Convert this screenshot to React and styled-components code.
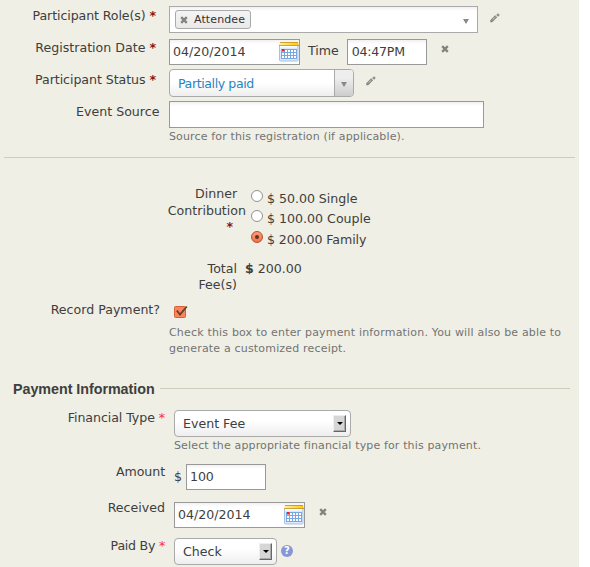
import React from "react";
import styled, { createGlobalStyle } from "styled-components";

const Global = createGlobalStyle`
  * { box-sizing: border-box; }
  html, body { margin: 0; background: #fff; }
  body { overflow: hidden; }
`;

const Page = styled.main`
  width: 579px;
  height: 567px;
  overflow: hidden;
  background: #efefe5;
  color: #3e3e3e;
  font: 12.6px/16px "DejaVu Sans", sans-serif;
  display: flex;
  flex-direction: column;
`;

const Row = styled.div`
  display: flex;
  flex: none;
  align-items: flex-start;
  height: ${(p) => p.$h}px;
`;

const Label = styled.div`
  flex: none;
  width: ${(p) => p.$w || 160}px;
  padding-right: ${(p) => p.$pr || 0}px;
  margin-top: ${(p) => p.$top || 0}px;
  text-align: right;
  white-space: nowrap;
  letter-spacing: ${(p) => p.$ls || 0}px;
`;

const Required = styled.span`
  color: ${(p) => (p.$bright ? "#ff2a3c" : "#8e1414")};
  font-weight: ${(p) => (p.$bright ? 400 : 700)};
`;

const Field = styled.div`
  display: flex;
  flex-direction: column;
  margin-left: 9px;
`;

const Line = styled.div`
  display: flex;
  align-items: flex-start;
`;

const Box = styled.div`
  display: flex;
  align-items: center;
  flex: none;
  width: ${(p) => p.$w}px;
  height: ${(p) => p.$h || 26}px;
  padding-left: ${(p) => p.$pl || 3}px;
  letter-spacing: ${(p) => p.$ls || 0}px;
  border: 1px solid #999;
  background: linear-gradient(#f1f1f1, #fff 4px);
`;

const TagBox = styled(Box)`
  justify-content: space-between;
  padding: 0 8px 0 5px;
  border-color: #aaa;
`;

const Tag = styled.div`
  display: flex;
  align-items: center;
  gap: 6px;
  height: 19px;
  width: 76px;
  padding-left: 4px;
  border: 1px solid #aaa;
  border-radius: 3px;
  background: linear-gradient(#f4f4f4, #e9e9e9);
  color: #333;
  font-size: 11px;
  letter-spacing: 0.1px;
`;

const Combo = styled.div`
  display: flex;
  width: 185px;
  height: 28px;
  border: 1px solid #aaa;
  border-radius: 4px;
  overflow: hidden;
  background: linear-gradient(#fff 50%, #eee);
  color: #2786c2;
`;

const ComboText = styled.div`
  flex: 1;
  padding: 6px 0 0 8px;
  letter-spacing: -0.42px;
`;

const ComboArrow = styled.div`
  display: flex;
  align-items: center;
  justify-content: center;
  width: 19px;
  padding-top: 2px;
  border-left: 1px solid #aaa;
  background: linear-gradient(#eee 30%, #ccc);
`;

const Select = styled.div`
  display: flex;
  align-items: center;
  justify-content: space-between;
  width: ${(p) => p.$w}px;
  height: 27px;
  padding: 0 4px 0 8px;
  border: 1px solid #aaa;
  border-radius: 4px;
  background: linear-gradient(#fff 40%, #eee);
`;

const SelectButton = styled.span`
  display: flex;
  align-items: center;
  justify-content: center;
  width: 13px;
  height: 17px;
  border: 1px solid;
  border-color: #eee #666 #666 #eee;
  box-shadow: inset -1px -1px #aaa;
  background: #d6d6d6;
`;

const Hint = styled.div`
  color: #737373;
  font-size: 11px;
  line-height: 16px;
  letter-spacing: ${(p) => p.$ls || 0.14}px;
  white-space: pre;
`;

const Inset = styled.div`
  flex: none;
  margin: ${(p) => p.$t || 0}px 0 0 ${(p) => p.$l || 0}px;
`;

const Divider = styled.div`
  flex: none;
  width: 571px;
  height: 1px;
  margin-left: 4px;
  background: #cdcdba;
`;

const Options = styled.div`
  display: flex;
  flex-direction: column;
  margin-left: 5px;
`;

const Option = styled.div`
  display: flex;
  gap: 4px;
  height: ${(p) => p.$h || 20}px;
`;

const OptionText = styled.span`
  margin-top: 2px;
  letter-spacing: ${(p) => p.$ls || 0}px;
`;

const Radio = styled.span`
  display: flex;
  align-items: center;
  justify-content: center;
  width: 12px;
  height: 12px;
  margin-top: 1px;
  border: 1px solid ${(p) => (p.$on ? "#b44f31" : "#929292")};
  border-radius: 50%;
  background: ${(p) => (p.$on ? "linear-gradient(#ff9c76, #ef7449)" : "#fff")};

  &::after {
    content: "";
    width: 4px;
    height: 4px;
    border-radius: 50%;
    background: ${(p) => (p.$on ? "#64301f" : "transparent")};
  }
`;

const Legend = styled.div`
  display: flex;
  align-items: center;
  flex: none;
  width: 570px;
  height: 16px;
  padding-left: 13px;
  gap: 5px;
  white-space: nowrap;
  font: bold 14.3px/16px "Liberation Sans", Arial, sans-serif;
  letter-spacing: -0.03px;

  &::after {
    content: "";
    flex: 1;
    height: 1px;
    margin-bottom: 1px;
    background: #cdcdba;
  }
`;

const Icon = styled.svg`
  display: block;
  flex: none;
`;

const Down = ({ color = "#888", w = 6, h = 5 }) => (
  <Icon width={w} height={h} viewBox="0 0 7 5" preserveAspectRatio="none"><path d="M0 0h7L3.5 5z" fill={color} /></Icon>
);

const Cross = () => (
  <Icon width="8" height="8" viewBox="0 0 8 8">
    <path d="M1.2 1.2l5.6 5.6M6.8 1.2L1.2 6.8" stroke="#84847e" strokeWidth="2.4" />
  </Icon>
);

const Pencil = () => (
  <Icon width="10" height="10" viewBox="0 0 10 10">
    <path d="M0.3 9.3V7.2L5.2 2.3l1.9 1.9-4.9 5z" fill="#80807a" />
    <path d="M2 7.4l4-4" stroke="#efefe5" strokeWidth=".9" strokeDasharray="1.4 .6" />
    <path d="M6.5 1.5h1V.5h1v1h1v1h-1v1h-1v-1h-1z" fill="#777771" />
  </Icon>
);

const Calendar = () => (
  <Icon width="20" height="20" viewBox="0 0 20 20">
    <defs>
      <linearGradient id="gold"><stop stopColor="#fff1a4" /><stop offset="1" stopColor="#ffc900" /></linearGradient>
    </defs>
    <rect x=".5" y="2.5" width="18.5" height="16.5" rx="1" fill="#dce9fa" stroke="#a9c0e6" />
    <rect x="1" y="4" width="17" height="1.5" fill="#fff" />
    <path d="M1 0h18l1 3.5H0z" fill="url(#gold)" />
    <path d="M1 .5h18M0 3.5h20" stroke="#c5901b" strokeWidth=".8" />
    <rect x="2" y="7" width="16" height="10" fill="#78a8e0" />
    <g fill="#fff">
      {[0, 1, 2].map((r) => [0, 1, 2, 3, 4].map((c) => (
        <rect key={`${r}-${c}`} x={3 + c * 3} y={8 + r * 3} width="2" height="2" />
      )))}
    </g>
    <rect x="3" y="7" width="2.5" height="2.5" fill="#f02516" />
  </Icon>
);

const Checkbox = () => (
  <Icon width="15" height="14" viewBox="0 0 15 14">
    <rect x=".5" y="1.5" width="11" height="11" rx="1" fill="#fa8559" stroke="#d2623b" />
    <path d="M2.8 5.5l3.2 4L12.8 1.5" fill="none" stroke="#68402f" strokeWidth="1.9" />
  </Icon>
);

const HelpBadge = styled.span`
  display: flex;
  align-items: center;
  justify-content: center;
  width: 12px;
  height: 12px;
  border-radius: 50%;
  background: #8896d7;
  color: #fff;
  font: bold 10px/12px "DejaVu Sans", sans-serif;
`;

const DateText = styled.span`
  flex: 1;
`;

const DateBox = () => (
  <Box $w={131}><DateText>04/20/2014</DateText><Calendar /></Box>
);

const DropDown = ({ w, children }) => (
  <Select $w={w}>{children}<SelectButton><Down color="#000" w={6} h={3} /></SelectButton></Select>
);

export default function App() {
  return (
    <Page>
      <Global />
      <Inset $t={6} />
      <Row $h={33}>
        <Label $top={2} $pr={4} $ls={-0.1}>Participant Role(s) <Required>*</Required></Label>
        <Field>
          <TagBox $w={309} $h={27}>
            <Tag><Cross />Attendee</Tag>
            <Inset $t={3}><Down /></Inset>
          </TagBox>
        </Field>
        <Inset $l={12} $t={7}><Pencil /></Inset>
      </Row>
      <Row $h={30}>
        <Label $top={1} $pr={4}>Registration Date <Required>*</Required></Label>
        <Field><DateBox /></Field>
        <Inset $l={8} $t={4}>Time</Inset>
        <Inset $l={8}><Box $w={80} $pl={4} $ls={-0.25}>04:47PM</Box></Inset>
        <Inset $l={14} $t={6}><Cross /></Inset>
      </Row>
      <Row $h={32}>
        <Label $top={3} $pr={4} $ls={-0.06}>Participant Status <Required>*</Required></Label>
        <Field><Combo><ComboText>Partially paid</ComboText><ComboArrow><Down /></ComboArrow></Combo></Field>
        <Inset $l={12} $t={7}><Pencil /></Inset>
      </Row>
      <Row $h={56}>
        <Label $top={3} $pr={0.6}>Event Source</Label>
        <Field>
          <Box $w={315} $h={27} />
          <Inset $t={1}><Hint>Source for this registration (if applicable).</Hint></Inset>
        </Field>
      </Row>
      <Divider />
      <Inset $t={28} />
      <Row $h={75}>
        <Label $w={246} $pr={0}>
          <Line><Inset $l={195}>Dinner</Inset></Line>
          <Inset $t={1}>Contribution</Inset>
          <Label $w={233}><Required>*</Required></Label>
        </Label>
        <Options>
          <Inset $t={3} />
          <Option><Radio /><OptionText $ls={-0.03}>$ 50.00 Single</OptionText></Option>
          <Option $h={21}><Radio /><OptionText>$ 100.00 Couple</OptionText></Option>
          <Option><Radio $on /><OptionText $ls={-0.08}>$ 200.00 Family</OptionText></Option>
        </Options>
      </Row>
      <Row $h={41}>
        <Label $w={237}>Total<br />Fee(s)</Label>
        <Inset $l={8}><b>$</b> 200.00</Inset>
      </Row>
      <Row $h={79}>
        <Label>Record Payment?</Label>
        <Field>
          <Inset $l={5} $t={3}><Checkbox /></Inset>
          <Inset $t={6}><Hint $ls={0.18}>{"Check this box to enter payment information. You will also be able to\ngenerate a customized receipt."}</Hint></Inset>
        </Field>
      </Row>
      <Legend>Payment Information</Legend>
      <Inset $t={13} />
      <Row $h={54}>
        <Label $w={165} $ls={-0.07}>Financial Type <Required $bright>*</Required></Label>
        <Field>
          <DropDown w={177}>Event Fee</DropDown>
          <Inset $t={1}><Hint>Select the appropriate financial type for this payment.</Hint></Inset>
        </Field>
      </Row>
      <Row $h={38}>
        <Label $w={165} $ls={-0.08}>Amount</Label>
        <Inset $l={9} $t={5}>$</Inset>
        <Inset $l={4}><Box $w={80} $ls={-0.1}>100</Box></Inset>
      </Row>
      <Row $h={36}>
        <Label $w={165} $top={-2}>Received</Label>
        <Field><DateBox /></Field>
        <Inset $l={14} $t={6}><Cross /></Inset>
      </Row>
      <Row $h={28}>
        <Label $w={165} $ls={-0.25}>Paid By <Required $bright>*</Required></Label>
        <Field><DropDown w={103}>Check</DropDown></Field>
        <Inset $l={4} $t={7}><HelpBadge>?</HelpBadge></Inset>
      </Row>
    </Page>
  );
}
